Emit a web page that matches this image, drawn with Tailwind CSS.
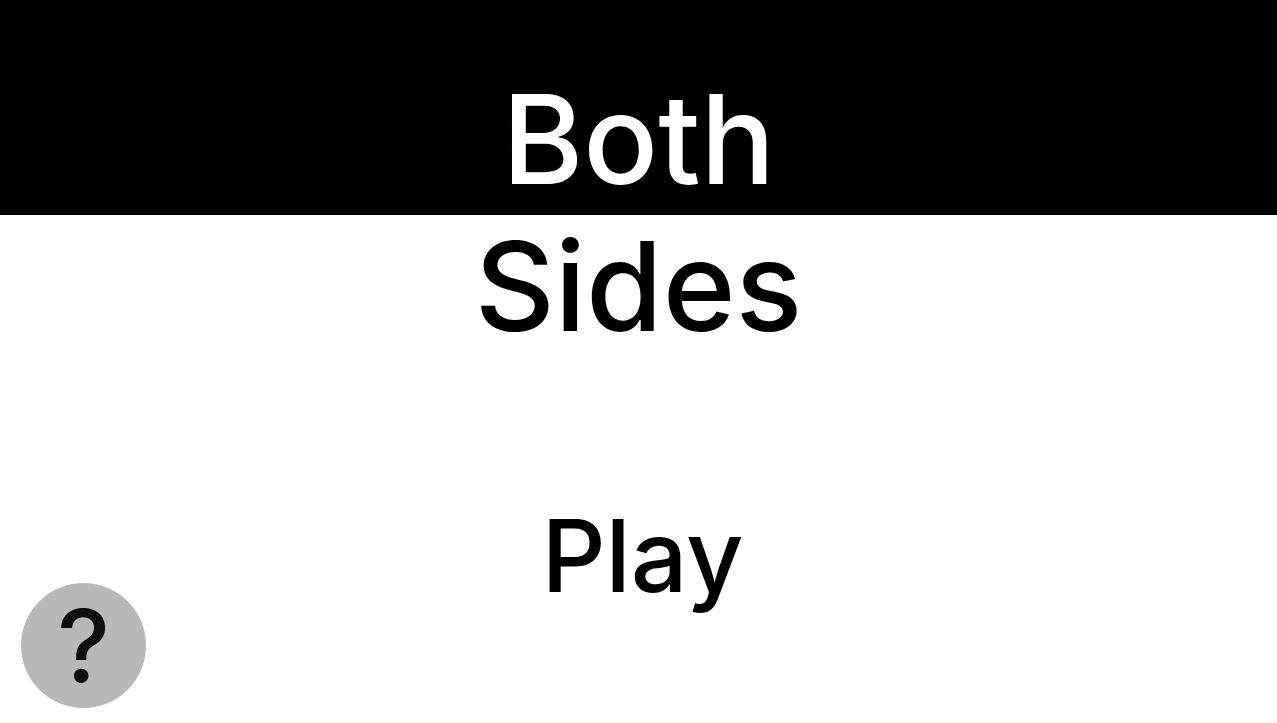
<!DOCTYPE html>
<html lang="en">
<head>
    <meta charset="UTF-8">
    <meta name="viewport" content="width=device-width, initial-scale=1.0">
    <title>Both Sides</title>
    <script src="https://cdn.jsdelivr.net/npm/@tailwindcss/browser@4"></script>
</head>
<body class="min-h-screen flex flex-col bg-white text-black font-[Inter,sans-serif] font-medium">
    <h1 class="text-center text-[124px] leading-[143px]">
        <span class="block bg-black text-white pt-17 pb-1">Both</span>
        <span class="block">Sides</span>
    </h1>

    <main class="flex justify-center pt-[138px] pl-2">
        <button type="button" class="text-[100px] leading-[120px] cursor-pointer">Play</button>
    </main>

    <button type="button" aria-label="Help" class="fixed left-[21px] bottom-[15px] size-[125px] rounded-full bg-[#b8b8b8] text-[#0f0f0f] flex items-center justify-center text-[100px] leading-none cursor-pointer">?</button>
</body>
</html>
